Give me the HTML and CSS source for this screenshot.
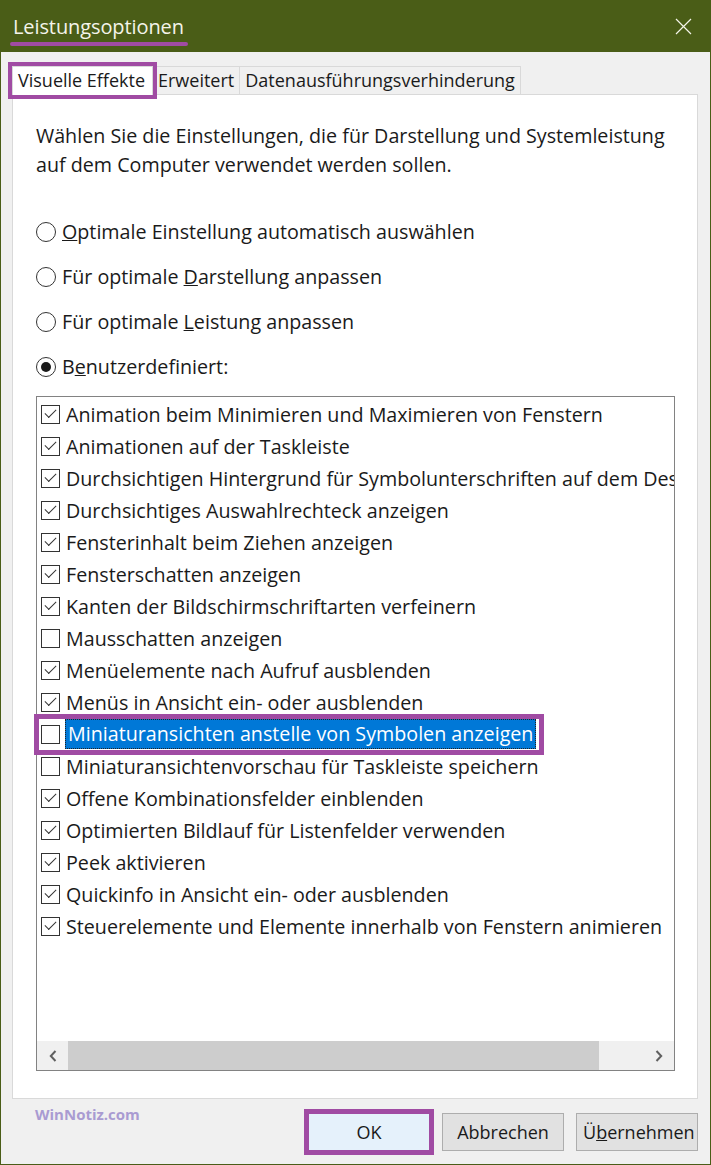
FILE: index.html
```html
<!DOCTYPE html>
<html lang="de">
<head>
    <meta charset="UTF-8">
    <meta name="viewport" content="width=device-width, initial-scale=1.0">
    <title>Leistungsoptionen</title>
    <link rel="stylesheet" href="styles.css">
</head>
<body>
    <div class="window">
        <!-- Title bar -->
        <header class="titlebar">
            <span class="title">Leistungsoptionen</span>
            <svg class="close" width="17" height="17" viewBox="0 0 17 17">
                <path d="M1 1L16 16M16 1L1 16" stroke="#f4f4ea" stroke-width="1.2" fill="none"/>
            </svg>
        </header>

        <!-- Tabs -->
        <nav class="tabs">
            <span class="tab tab-active">Visuelle Effekte</span>
            <span class="tab">Erweitert</span>
            <span class="tab">Datenausführungsverhinderung</span>
        </nav>

        <section class="panel">
            <p class="intro">Wählen Sie die Einstellungen, die für Darstellung und Systemleistung<br>auf dem Computer verwendet werden sollen.</p>

            <div class="radios">
                <div class="radio"><span class="dot"></span><span><u>O</u>ptimale Einstellung automatisch auswählen</span></div>
                <div class="radio"><span class="dot"></span><span>Für optimale <u>D</u>arstellung anpassen</span></div>
                <div class="radio"><span class="dot"></span><span>Für optimale <u>L</u>eistung anpassen</span></div>
                <div class="radio"><span class="dot dot-on"></span><span>B<u>e</u>nutzerdefiniert:</span></div>
            </div>

            <div class="listbox">
                <ul class="items">
                    <li class="item"><span class="box on"></span><span class="text">Animation beim Minimieren und Maximieren von Fenstern</span></li>
                    <li class="item"><span class="box on"></span><span class="text">Animationen auf der Taskleiste</span></li>
                    <li class="item"><span class="box on"></span><span class="text">Durchsichtigen Hintergrund für Symbolunterschriften auf dem Desktop</span></li>
                    <li class="item"><span class="box on"></span><span class="text">Durchsichtiges Auswahlrechteck anzeigen</span></li>
                    <li class="item"><span class="box on"></span><span class="text">Fensterinhalt beim Ziehen anzeigen</span></li>
                    <li class="item"><span class="box on"></span><span class="text">Fensterschatten anzeigen</span></li>
                    <li class="item"><span class="box on"></span><span class="text">Kanten der Bildschirmschriftarten verfeinern</span></li>
                    <li class="item"><span class="box"></span><span class="text">Mausschatten anzeigen</span></li>
                    <li class="item"><span class="box on"></span><span class="text">Menüelemente nach Aufruf ausblenden</span></li>
                    <li class="item"><span class="box on"></span><span class="text">Menüs in Ansicht ein- oder ausblenden</span></li>
                    <li class="item item-selected">
                        <span class="mark"><span class="box"></span><span class="text text-selected">Miniaturansichten anstelle von Symbolen anzeigen</span></span>
                    </li>
                    <li class="item"><span class="box"></span><span class="text">Miniaturansichtenvorschau für Taskleiste speichern</span></li>
                    <li class="item"><span class="box on"></span><span class="text">Offene Kombinationsfelder einblenden</span></li>
                    <li class="item"><span class="box on"></span><span class="text">Optimierten Bildlauf für Listenfelder verwenden</span></li>
                    <li class="item"><span class="box on"></span><span class="text">Peek aktivieren</span></li>
                    <li class="item"><span class="box on"></span><span class="text">Quickinfo in Ansicht ein- oder ausblenden</span></li>
                    <li class="item"><span class="box on"></span><span class="text">Steuerelemente und Elemente innerhalb von Fenstern animieren</span></li>
                </ul>
                <div class="hscroll">
                    <span class="arrow">
                        <svg width="8" height="12" viewBox="0 0 8 12"><path d="M6.5 1L1.8 6l4.7 5" stroke="#606060" stroke-width="2" fill="none"/></svg>
                    </span>
                    <span class="thumb"></span>
                    <span class="track"></span>
                    <span class="arrow">
                        <svg width="8" height="12" viewBox="0 0 8 12"><path d="M1.5 1l4.7 5-4.7 5" stroke="#606060" stroke-width="2" fill="none"/></svg>
                    </span>
                </div>
            </div>
        </section>

        <footer class="footer">
            <span class="brand">WinNotiz.com</span>
            <div class="buttons">
                <button class="btn btn-default">OK</button>
                <button class="btn">Abbrechen</button>
                <button class="btn">Ü<u>b</u>ernehmen</button>
            </div>
        </footer>
    </div>
</body>
</html>
```

FILE: styles.css
```css
* {
    box-sizing: border-box;
}

body {
    margin: 0;
    background: #f0f0f0;
    font-family: 'Open Sans', 'Noto Sans', sans-serif;
    color: #1a1a1a;
}

.window {
    width: 711px;
    height: 1165px;
    display: flex;
    flex-direction: column;
    background: #f0f0f0;
    border: 1px solid #4a5d17;
    border-top: none;
}

/* title bar */
.titlebar {
    flex: 0 0 52px;
    margin: 0 -1px;
    display: flex;
    align-items: center;
    justify-content: space-between;
    padding: 0 19px 0 13px;
    background: #4a5d17;
    color: #f4f4ea;
}

.title {
    position: relative;
    font-size: 20px;
    letter-spacing: -0.1px;
    line-height: 26px;
    margin-top: 2px;
}

.title::after {
    content: "";
    position: absolute;
    left: -3px;
    right: -4px;
    top: 28px;
    height: 4px;
    border-radius: 2px;
    background: #a04ba3;
}

/* tabs */
.tabs {
    display: flex;
    margin: 14px 0 0 11px;
    height: 28px;
    white-space: nowrap;
}

.tab {
    height: 28px;
    padding: 0 5px;
    font-size: 18px;
    line-height: 27px;
    border: 1px solid #d9d9d9;
    border-bottom: none;
    border-left: none;
    background: #f0f0f0;
}

.tab-active {
    position: relative;
    z-index: 1;
    height: 29px;
    width: 141px;
    padding: 0 5px;
    background: #fff;
    border-left: 1px solid #d9d9d9;
    outline: 4px solid #a04ba3;
}

/* panel */
.panel {
    flex: 0 0 1005px;
    margin: 0 12px 0 11px;
    padding: 26px 22px 0 23px;
    background: #fff;
    border: 1px solid #d9d9d9;
}

.intro {
    margin: 0;
    font-size: 19.7px;
    line-height: 29px;
}

.radios {
    display: flex;
    flex-direction: column;
    margin-top: 30px;
}

.radio {
    height: 45px;
    display: flex;
    align-items: center;
    gap: 6px;
    font-size: 19.7px;
}

.dot {
    width: 20px;
    height: 20px;
    border: 1px solid #333;
    border-radius: 50%;
    display: flex;
    align-items: center;
    justify-content: center;
}

.dot-on::before {
    content: "";
    width: 10px;
    height: 10px;
    border-radius: 50%;
    background: #1a1a1a;
}

/* list with checkboxes */
.listbox {
    height: 675px;
    margin-top: 7px;
    display: flex;
    flex-direction: column;
    border: 1px solid #828282;
}

.items {
    flex: 1;
    list-style: none;
    margin: 0;
    padding: 1px 0 0;
}

.item {
    height: 32px;
    display: flex;
    align-items: center;
    gap: 6px;
    padding-left: 4px;
    font-size: 19.7px;
}

.box {
    position: relative;
    flex: 0 0 19px;
    height: 19px;
    border: 1px solid #333;
    background: #fff;
}

.box.on::after {
    content: "";
    position: absolute;
    left: 3px;
    top: 3px;
    width: 10px;
    height: 5px;
    border-left: 1.4px solid #333;
    border-bottom: 1.4px solid #333;
    transform: rotate(-45deg);
}

.text {
    min-width: 0;
    overflow: hidden;
    white-space: nowrap;
}

.item-selected {
    padding-left: 2px;
}

.mark {
    height: 31px;
    display: flex;
    align-items: center;
    gap: 5px;
    padding: 0 3px 0 2px;
    outline: 5px solid #a04ba3;
}

.text-selected {
    padding: 0 2px 1px;
    color: #fff;
    background: #0078d7;
    border: 1px dotted #222;
}

.hscroll {
    flex: 0 0 29px;
    display: flex;
    background: #f0f0f0;
}

.arrow {
    flex: 0 0 31px;
    display: flex;
    align-items: center;
    justify-content: center;
}

.thumb {
    flex: 0 0 531px;
    background: #cdcdcd;
}

.track {
    flex: 1;
}

/* footer */
.footer {
    flex: 1;
    display: flex;
    justify-content: space-between;
    padding: 5px 12px 0 34px;
}

.brand {
    font-size: 15px;
    font-weight: 700;
    color: #a99bd2;
    line-height: 20px;
}

.buttons {
    display: flex;
    gap: 12px;
    margin-top: 9px;
}

.btn {
    width: 122px;
    height: 38px;
    font-family: inherit;
    font-size: 18px;
    color: #1a1a1a;
    background: #e1e1e1;
    border: 1px solid #adadad;
}

.btn-default {
    background: #e5f1fb;
    border-color: #0078d7;
    outline: 5px solid #a04ba3;
    outline-offset: -1px;
}
```
